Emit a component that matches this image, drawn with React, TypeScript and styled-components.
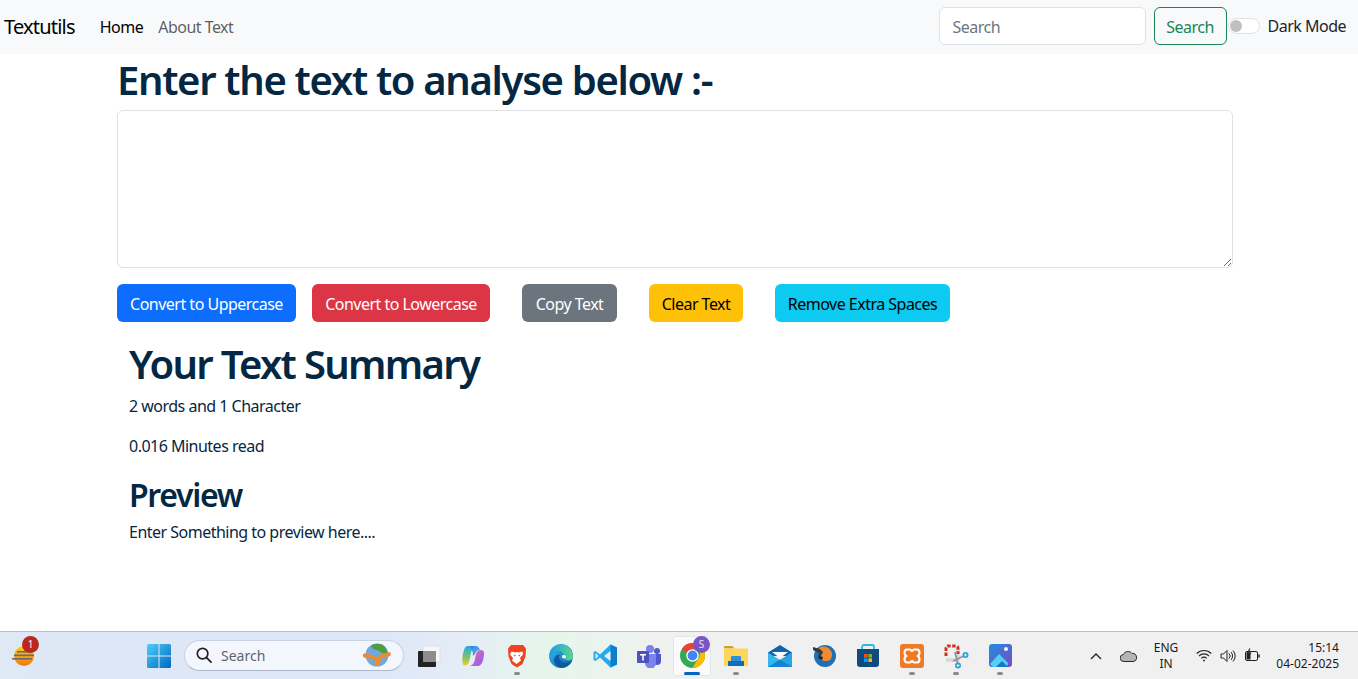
import React from "react";
import styled, { createGlobalStyle } from "styled-components";

const Global = createGlobalStyle`
  html, body { margin: 0; padding: 0; background: #fff; }
  body { font-family: "Noto Sans", "Open Sans", sans-serif; font-size: 16px; line-height: 1.5; color: #212529; letter-spacing: -0.032em; overflow: hidden; }
  * { box-sizing: border-box; }
`;

const Page = styled.div`display: flex; flex-direction: column; height: 679px; width: 1358px; overflow: hidden;`;
const Nav = styled.nav`display: flex; align-items: center; height: 54px; background: #f8f9fa; padding: 0 12px 2px 4px; flex: none;`;
const Brand = styled.a`font-size: 20px; color: #000; margin-right: 25px; line-height: 30px; letter-spacing: -0.04em; padding-top: 2px;`;
const NavLink = styled.a<{ $active?: boolean }>`color: ${p => (p.$active ? "#000" : "rgba(0,0,0,.65)")}; margin-right: 15px; padding-top: 2px;`;
const NavRight = styled.div`margin-left: auto; display: flex; align-items: center;`;
const SearchInput = styled.input`width: 207px; height: 38px; border: 1px solid #dee2e6; border-radius: 6px; padding: 7px 12px 5px 13px; font: inherit; letter-spacing: inherit; color: #212529; background: #fff; margin-right: 8px; &::placeholder { color: #6c757d; opacity: 1; }`;
const SearchButton = styled.button`width: 73px; height: 38px; border: 1px solid #198754; border-radius: 6px; background: transparent; color: #198754; font: inherit; letter-spacing: inherit; padding: 2px 0 0;`;
const Switch = styled.span`display: inline-block; width: 32px; height: 16px; margin: 0 8px 0 1px; border: 1px solid #dee2e6; border-radius: 16px; background: #fff; position: relative; &::after { content: ""; position: absolute; left: 1px; top: 1px; width: 12px; height: 12px; border-radius: 50%; background: #bfbfbf; }`;
const SwitchLabel = styled.span`color: #212529;`;

const Main = styled.main`flex: 1; width: 1140px; margin-left: 105px; padding: 0 12px; color: #042743;`;
const Title = styled.h1`font-size: 40px; font-weight: 600; line-height: 48px; margin: 2px 0 6px; color: #042743; letter-spacing: -0.033em;`;
const TextBox = styled.textarea`display: block; width: 1116px; height: 158px; border: 1px solid #dee2e6; border-radius: 6px; background: #fff; resize: vertical; margin: 0 0 16px; outline: none;`;
const Buttons = styled.div`display: flex; height: 38px;`;
const Action = styled.button<{ $bg: string; $fg?: string; $w: number; $mr: number }>`
  width: ${p => p.$w}px; margin-right: ${p => p.$mr}px; height: 38px; border: 0; border-radius: 6px; padding: 2px 0 0;
  background: ${p => p.$bg}; color: ${p => p.$fg ?? "#fff"}; font: inherit; letter-spacing: inherit;
`;
const Summary = styled.section`padding: 0 12px; margin-top: 18px;`;
const H1 = styled.h1`font-size: 40px; font-weight: 600; line-height: 48px; margin: 0 0 6px; letter-spacing: -0.042em;`;
const H2 = styled.h2`font-size: 32px; font-weight: 600; line-height: 38px; padding-top: 2px; margin: 0 0 6px; letter-spacing: -0.041em;`;
const P = styled.p`margin: 0 0 16px; color: #042743; &:last-of-type { margin-bottom: 0; }`;

const Taskbar = styled.footer`
  flex: none; height: 48px; display: flex; align-items: center; position: relative;
  border-top: 1px solid #bcbfc4; color: #1a1a1a; letter-spacing: 0;
  background: linear-gradient(90deg, #dfe8f5 0%, #dde7f6 28%, #e4ebf8 33%, #e6f5ec 40%, #eef2ee 47%, #f0f0f1 54%, #f0f0f0 100%);
`;
const Weather = styled.div`width: 137px; padding-left: 11px; flex: none; position: relative; display: flex; align-items: center;`;
const Badge = styled.span`position: absolute; left: 22px; top: -8px; width: 17px; height: 17px; border-radius: 50%; background: #b9281b; color: #fff; font-size: 10px; line-height: 17px; text-align: center;`;
const Slot = styled.div<{ $active?: boolean; $open?: boolean }>`
  width: 44px; height: 40px; flex: none; display: flex; align-items: center; justify-content: center; position: relative;
  border-radius: 4px; ${p => p.$active ? "background: #fafafa; box-shadow: 0 0 0 1px #e6e6e6 inset; width: 38px; margin: 0 3px 0 2px;" : ""}
  &::after { content: ""; display: ${p => (p.$open || p.$active ? "block" : "none")}; position: absolute; bottom: 1px; left: 50%; transform: translateX(-50%);
    width: ${p => (p.$active ? "16px" : "6px")}; height: 3px; border-radius: 2px; background: ${p => (p.$active ? "#0067c0" : "#8a8a8a")}; }
`;
const Pill = styled.div`width: 220px; height: 31px; margin: 0 3px 1px 3px; flex: none; display: flex; align-items: center; padding: 0 12px 0 11px; border-radius: 16px; background: #f3f6fd; border: 1px solid #c9d2e2; border-bottom-color: #aeb8cb;`;
const PillText = styled.span`font-size: 14px; color: #5f6368; margin-left: 9px; flex: 1;`;
const ChromeBadge = styled.span`position: absolute; right: 1px; top: 0; width: 17px; height: 17px; border-radius: 50%; background: #7a56c4; color: #e9e2f8; font-size: 10px; line-height: 17px; text-align: center;`;
const Tray = styled.div`margin-left: auto; display: flex; align-items: center; height: 100%; padding-right: 19px;`;
const TrayIcon = styled.div<{ $w: number }>`width: ${p => p.$w}px; flex: none; display: flex; justify-content: center; align-items: center;`;
const Lang = styled.div`width: 44px; font-size: 12px; line-height: 16px; text-align: center; flex: none; margin: 0 2px 0 0;`;
const Clock = styled.div`width: 73px; font-size: 12px; line-height: 16px; text-align: right; flex: none;`;

const WeatherIcon = () => (
  <svg width="24" height="24" viewBox="0 0 24 24">
    <defs><linearGradient id="sun" x1="0" y1="0" x2="0" y2="1"><stop offset="0" stopColor="#ffcb1f" /><stop offset="1" stopColor="#ef7a0c" /></linearGradient></defs>
    <circle cx="13" cy="12" r="10" fill="url(#sun)" />
    <g fill="#6b6b6b"><rect x="6" y="7" width="12" height="1.600" /><rect x="3" y="10.500" width="20" height="1.600" /><rect x="1" y="14" width="20" height="1.600" /></g>
  </svg>
);
const WinIcon = () => (
  <svg width="24" height="24" viewBox="0 0 24 24">
    <defs><linearGradient id="win" x1="0" y1="0" x2="1" y2="1"><stop offset="0" stopColor="#4dd0fb" /><stop offset="1" stopColor="#0067c0" /></linearGradient></defs>
    <path fill="url(#win)" d="M0 1.500A1.500 1.500 0 0 1 1.500 0H11.500V11.500H0ZM12.500 0H22.500A1.500 1.500 0 0 1 24 1.500V11.500H12.500ZM0 12.500H11.500V24H1.500A1.500 1.500 0 0 1 0 22.500ZM12.500 12.500H24V22.500A1.500 1.500 0 0 1 22.500 24H12.500Z" />
  </svg>
);
const SearchGlyph = () => (
  <svg width="16" height="16" viewBox="0 0 17 17" fill="none" stroke="#222" strokeWidth="1.800"><circle cx="7" cy="7" r="5.600" /><path d="M11.200 11.200 16 16" strokeLinecap="round" /></svg>
);
const GlobeIcon = () => (
  <svg width="28" height="24" viewBox="0 0 28 24">
    <circle cx="14" cy="12" r="11.500" fill="#6fa8dc" />
    <path d="M8 3c4-3 11-3 14 1l3 7c-4 1-6-1-9-3s-5 0-8-5Z" fill="#4f9e3a" />
    <path d="M0 11c4-2 7 0 10 2l4 1 5-3 8-2c1 1 1 3 0 4l-8 2-3 8h-3l-2-7-9-1c-2-1-3-3-2-4Z" fill="#ef8a2e" />
  </svg>
);
const TaskViewIcon = () => (
  <svg width="24" height="24" viewBox="0 0 24 24">
    <rect x="6" y="2" width="17" height="16" rx="1" fill="#f7f7f7" stroke="#dedede" />
    <rect x="1" y="7" width="18" height="16" rx="1" fill="#222" />
    <path d="M6 7h13v11H6Z" fill="#8d8d8d" />
  </svg>
);
const CopilotIcon = () => (
  <svg width="24" height="24" viewBox="0 0 24 24">
    <defs>
      <linearGradient id="c1" x1="0" y1="0" x2="0" y2="1"><stop offset="0" stopColor="#27a7e8" /><stop offset=".6" stopColor="#7cc660" /><stop offset="1" stopColor="#f5c93a" /></linearGradient>
      <linearGradient id="c2" x1="0" y1="0" x2="1" y2="1"><stop offset="0" stopColor="#e86ab8" /><stop offset="1" stopColor="#8a63e8" /></linearGradient>
    </defs>
    <path d="M7 2h8c-3 1-4 3-5 7l-2 9c-1 3-3 4-6 3-1-4-1-10 1-15 1-3 2-4 4-4Z" fill="url(#c1)" />
    <path d="M17 22H9c3-1 4-3 5-7l1-5c1-3 3-4 5-4 2 0 3 1 3 3 0 6-2 13-6 13Z" fill="url(#c2)" />
    <path d="M8 2h7c2 0 3 2 4 4-3 0-4 1-5 4l-2 2c0-4-1-8-4-10Z" fill="#2c8bea" opacity=".85" />
  </svg>
);
const BraveIcon = () => (
  <svg width="24" height="24" viewBox="0 0 24 24">
    <path d="M6 1h12l3 3.500-0.500 8-3 7.500L12 23.500 6.500 20l-3-7.500L3 4.500Z" fill="#f0431f" />
    <path d="M6.500 7.500 10.500 8.500 12 8l1.500.5L17.500 7.500l.5 3-3 3.500 1 2.500-4.500 3.500-4.500-3.500 1-2.500-3-3.500Z" fill="#fff" />
    <path d="M8.500 10.500l2.500 1-1.500 1ZM15.500 10.500l-2.500 1 1.500 1Z" fill="#f0431f" />
  </svg>
);
const EdgeIcon = () => (
  <svg width="24" height="24" viewBox="0 0 24 24">
    <defs>
      <linearGradient id="e1" x1="0" y1="0" x2="1" y2="1"><stop offset="0" stopColor="#35c1f1" /><stop offset="1" stopColor="#0c59a4" /></linearGradient>
      <linearGradient id="e2" x1="0" y1="0" x2="1" y2="0"><stop offset="0" stopColor="#1b9de2" /><stop offset="1" stopColor="#5fd68a" /></linearGradient>
    </defs>
    <circle cx="12" cy="12" r="12" fill="url(#e1)" />
    <path d="M1 9C3 2 12-2 19 3c4 3 5 7 5 10 0 3-4 4-7 3-3-1-3-3-2-4 0-4-5-6-8-5C4 8 2 10 1 13Z" fill="url(#e2)" />
    <path d="M12 17c3 3 8 2 11 0-2 4-6 7-11 7-3-1-6-3-7-7 0-4 3-7 6-6-2 2-1 4 1 6Z" fill="#0c59a4" />
    <path d="M14 11c3 0 4 2 2 3-2 1-3 0-3-1s0-2 1-2Z" fill="#f0f0f0" />
  </svg>
);
const VSCodeIcon = () => (
  <svg width="24" height="24" viewBox="0 0 24 24">
    <path d="M17.500 0.500 24 3.500V20.500L17.500 23.500 7 13.500 2.500 17 0.500 16V8L2.500 7 7 10.500Z" fill="#23a9f2" />
    <path d="M17.500 0.500 24 3.500V20.500L17.500 23.500Z" fill="#0f7fcc" />
    <path d="M17.500 7 11 12l6.500 5Z" fill="#f0f0f1" />
    <path d="M2.500 9v6L5.500 12Z" fill="#f0f0f1" />
  </svg>
);
const TeamsIcon = () => (
  <svg width="26" height="24" viewBox="0 0 26 24">
    <circle cx="14" cy="5" r="4" fill="#7b83eb" />
    <circle cx="21" cy="7" r="3" fill="#5059c9" />
    <path d="M17 10h8v7a4 4 0 0 1-8 0Z" fill="#5059c9" />
    <path d="M9 10h11v9a5.500 5.500 0 0 1-11 0Z" fill="#7b83eb" />
    <rect x="1" y="7" width="12" height="12" rx="1" fill="#4b53bc" />
    <path d="M4 10h6v1.500H7.800V16.500H6.200V11.500H4Z" fill="#fff" />
  </svg>
);
const ChromeIcon = () => (
  <svg width="25" height="25" viewBox="0 0 24 24">
    <circle cx="12" cy="12" r="12" fill="#34a853" />
    <path d="M12 0a12 12 0 0 1 10.400 6H12a6 6 0 0 0-5.200 3L1.600 6A12 12 0 0 1 12 0Z" fill="#ea4335" />
    <path d="M22.400 6A12 12 0 0 1 12 24l5.200-9a6 6 0 0 0 0-9Z" fill="#fbbc04" />
    <circle cx="12" cy="12" r="6" fill="#fff" />
    <circle cx="12" cy="12" r="4.700" fill="#4285f4" />
  </svg>
);
const FolderIcon = () => (
  <svg width="24" height="24" viewBox="0 0 24 24">
    <path d="M0 3a1 1 0 0 1 1-1h7l3 2.500H0Z" fill="#d89f0f" />
    <path d="M0 4.500h23a1 1 0 0 1 1 1V21a1 1 0 0 1-1 1H1a1 1 0 0 1-1-1Z" fill="#fcd55a" />
    <path d="M7 13a1 1 0 0 1 1-1h8a1 1 0 0 1 1 1v4H7Z" fill="#2f8fdc" />
    <path d="M4 17h16v5H4Z" fill="#0f6cbd" />
  </svg>
);
const MailIcon = () => (
  <svg width="24" height="24" viewBox="0 0 24 24">
    <path d="M12 1 24 8.500V12H0V8.500Z" fill="#0f63ad" />
    <path d="M4 8h16l-8 6Z" fill="#fff" />
    <path d="M0 8.500 12 16 24 8.500V23H0Z" fill="#35b6ee" />
    <path d="M12 16 24 8.500V23Z" fill="#2aa3e2" />
    <path d="M0 23 12 15.500 24 23Z" fill="#1583d2" />
  </svg>
);
const DiscIcon = () => (
  <svg width="24" height="24" viewBox="0 0 24 24">
    <circle cx="13" cy="12" r="11" fill="#1f6fb5" />
    <path d="M7 4c4-3 10-1 12 3 2 3 1 7-1 9-3 2-8 1-9-1-1-3-3-8-2-11Z" fill="#ee8a33" />
    <path d="M1 3l7 2 3 3-2 4v3l-3-1 1-5-6-3Z" fill="#3a3a3a" />
    <circle cx="9" cy="14" r="1.800" fill="#222" />
  </svg>
);
const StoreIcon = () => (
  <svg width="24" height="24" viewBox="0 0 24 24">
    <path d="M6 6V3a2 2 0 0 1 2-2h8a2 2 0 0 1 2 2v3" fill="none" stroke="#27b7ef" strokeWidth="1.800" />
    <path d="M1 5h22v15a3 3 0 0 1-3 3H4a3 3 0 0 1-3-3Z" fill="#114a80" />
    <rect x="8" y="10" width="3.600" height="3.600" fill="#f25022" />
    <rect x="12.400" y="10" width="3.600" height="3.600" fill="#7fba00" />
    <rect x="8" y="14.400" width="3.600" height="3.600" fill="#00a4ef" />
    <rect x="12.400" y="14.400" width="3.600" height="3.600" fill="#ffb900" />
  </svg>
);
const XamppIcon = () => (
  <svg width="24" height="24" viewBox="0 0 24 24">
    <rect width="24" height="24" rx="3" fill="#ee7a25" />
    <path d="M7 5.500h2.500C11 5.500 12 7 12 8c0-1 1-2.500 2.500-2.500H17c2 0 2.500 2 2.500 3.500 0 2-1.500 3-1.500 3s1.500 1 1.500 3c0 1.500-.5 3.500-2.500 3.500h-2.500C13 18.500 12 17 12 16c0 1-1 2.500-2.500 2.500H7c-2 0-2.500-2-2.500-3.500 0-2 1.500-3 1.500-3S4.500 11 4.500 9c0-1.500.5-3.500 2.500-3.500Z" fill="none" stroke="#fff" strokeWidth="2.200" />
  </svg>
);
const SnipIcon = () => (
  <svg width="26" height="26" viewBox="0 0 26 26">
    <path d="M3 17H15V6" fill="none" stroke="#d5d8dc" strokeWidth="3.500" />
    <path d="M3 13V5a2 2 0 0 1 2-2h8a2 2 0 0 1 2 2v6" fill="none" stroke="#d1321f" strokeWidth="3" strokeDasharray="3.500 1.500" />
    <path d="M12 9l3 13M23 12l-13 6" fill="none" stroke="#8f969c" strokeWidth="1.800" />
    <circle cx="22.500" cy="12" r="3" fill="#2f9fd8" />
    <circle cx="15" cy="22.500" r="3" fill="#2f9fd8" />
    <path d="M21 12h3M22.500 10.500v3M13.500 22.500h3M15 21v3" stroke="#fff" strokeWidth=".8" />
  </svg>
);
const PhotosIcon = () => (
  <svg width="23" height="23" viewBox="0 0 23 23">
    <defs><linearGradient id="ph" x1="0" y1="0" x2="1" y2="1"><stop offset="0" stopColor="#1d8fe0" /><stop offset="1" stopColor="#7a4ac4" /></linearGradient></defs>
    <rect width="23" height="23" rx="3" fill="url(#ph)" />
    <circle cx="17" cy="5" r="2" fill="#f1f1f5" />
    <path d="M1 20 10 10l9 9-1 4H4Z" fill="#53d0f7" />
    <path d="M7 23l6-6 6 6Z" fill="#1577c9" />
  </svg>
);
const Chevron = () => (<svg width="12" height="8" viewBox="0 0 12 8" fill="none" stroke="#222" strokeWidth="1.300"><path d="M1 7 6 2l5 5" /></svg>);
const Cloud = () => (
  <svg width="17" height="12" viewBox="0 0 17 12"><path d="M4 11.500a3.500 3.500 0 0 1-.6-7A5 5 0 0 1 12 3.500a4 4 0 0 1 1 8Z" fill="#b5b5b5" stroke="#2a2a2a" /></svg>
);
const Wifi = () => (
  <svg width="16" height="13" viewBox="0 0 16 13" fill="none" stroke="#222" strokeWidth="1.100"><path d="M.8 4.500a10 10 0 0 1 14.400 0M3 7a7 7 0 0 1 10 0M5.300 9.300a3.700 3.700 0 0 1 5.400 0" /><circle cx="8" cy="11.500" r=".9" fill="#222" stroke="none" /></svg>
);
const Volume = () => (
  <svg width="16" height="14" viewBox="0 0 16 14" fill="none" stroke="#222" strokeWidth="1"><path d="M1 5h2.500L7 1.500v11L3.500 9H1Z" /><path d="M9 4.500a3.500 3.500 0 0 1 0 5M11 3a6 6 0 0 1 0 8M13 1.500a8 8 0 0 1 0 11" /></svg>
);
const Battery = () => (
  <svg width="17" height="15" viewBox="0 0 17 15" fill="none" stroke="#222" strokeWidth="1"><rect x="1.500" y="3.500" width="12" height="9" rx="1.500" /><path d="M15 6.500v3" strokeWidth="1.500" /><path d="M2.500 4.500h4v7h-4Z" fill="#222" stroke="none" /><path d="M6 .5 3.500 5h3L4 9.500" strokeWidth="1.100" /></svg>
);

const apps: [React.ComponentType, boolean][] = [
  [TaskViewIcon, false], [CopilotIcon, false], [BraveIcon, true], [EdgeIcon, false], [VSCodeIcon, false], [TeamsIcon, false],
];
const apps2: [React.ComponentType, boolean][] = [
  [FolderIcon, true], [MailIcon, false], [DiscIcon, false], [StoreIcon, false], [XamppIcon, true], [SnipIcon, true], [PhotosIcon, true],
];

export default function App() {
  return (
    <Page>
      <Global />
      <Nav>
        <Brand>Textutils</Brand>
        <NavLink $active>Home</NavLink>
        <NavLink>About Text</NavLink>
        <NavRight>
          <SearchInput placeholder="Search" />
          <SearchButton>Search</SearchButton>
          <Switch />
          <SwitchLabel>Dark Mode</SwitchLabel>
        </NavRight>
      </Nav>
      <Main>
        <Title>Enter the text to analyse below :-</Title>
        <TextBox />
        <Buttons>
          <Action $bg="#0d6efd" $w={179} $mr={16}>Convert to Uppercase</Action>
          <Action $bg="#dc3545" $w={178} $mr={32}>Convert to Lowercase</Action>
          <Action $bg="#6c757d" $w={95} $mr={32}>Copy Text</Action>
          <Action $bg="#ffc107" $fg="#000" $w={94} $mr={32}>Clear Text</Action>
          <Action $bg="#0dcaf0" $fg="#000" $w={175} $mr={0}>Remove Extra Spaces</Action>
        </Buttons>
        <Summary>
          <H1>Your Text Summary</H1>
          <P>2 words and 1 Character</P>
          <P>0.016 Minutes read</P>
          <H2>Preview</H2>
          <P>Enter Something to preview here....</P>
        </Summary>
      </Main>
      <Taskbar>
        <Weather><WeatherIcon /><Badge>1</Badge></Weather>
        <Slot><WinIcon /></Slot>
        <Pill><SearchGlyph /><PillText>Search</PillText><GlobeIcon /></Pill>
        {apps.map(([I, open], i) => <Slot key={i} $open={open}><I /></Slot>)}
        <Slot $active><ChromeIcon /><ChromeBadge>S</ChromeBadge></Slot>
        {apps2.map(([I, open], i) => <Slot key={i} $open={open}><I /></Slot>)}
        <Tray>
          <TrayIcon $w={32}><Chevron /></TrayIcon>
          <TrayIcon $w={32}><Cloud /></TrayIcon>
          <Lang>ENG<br />IN</Lang>
          <TrayIcon $w={28}><Wifi /></TrayIcon>
          <TrayIcon $w={20}><Volume /></TrayIcon>
          <TrayIcon $w={28}><Battery /></TrayIcon>
          <Clock>15:14<br />04-02-2025</Clock>
        </Tray>
      </Taskbar>
    </Page>
  );
}
